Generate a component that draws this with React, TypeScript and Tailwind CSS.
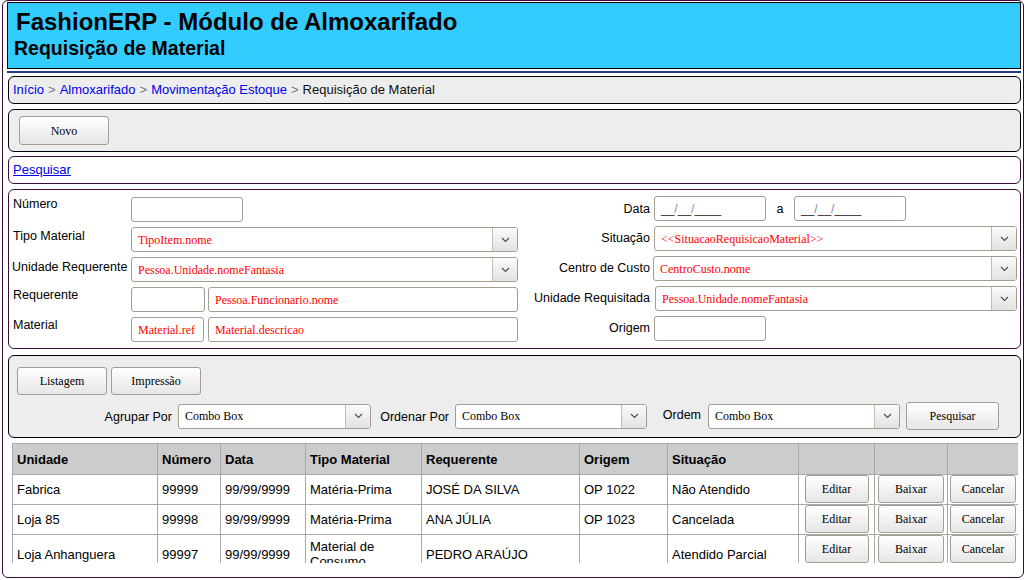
import React from "react";

const sans = "font-['Liberation_Sans',Arial,sans-serif]";
const serif = "font-['Liberation_Serif','Times_New_Roman',serif]";

function Chevron() {
  return (
    <svg width="9" height="6" viewBox="0 0 9 6">
      <path d="M1 1 L4.5 4.5 L8 1" stroke="#4a4a4a" strokeWidth="1.1" fill="none" />
    </svg>
  );
}

function Select({ className = "", text, red = false }: { className?: string; text: string; red?: boolean }) {
  return (
    <div className={`flex h-[25px] border border-[#a59d8f] rounded-[3px] bg-white overflow-hidden ${className}`}>
      <div className={`flex-1 flex items-center pl-[6px] text-[12px] whitespace-nowrap ${serif} ${red ? "text-[#ff0000]" : "text-black"}`}>
        {text}
      </div>
      <div className="w-[25px] border-l border-[#c4bdb1] bg-linear-to-b from-[#fbfbfb] to-[#e2e2e2] flex items-center justify-center">
        <Chevron />
      </div>
    </div>
  );
}

function Input({ className = "", text, children }: { className?: string; text?: string; children?: React.ReactNode }) {
  return (
    <div className={`flex items-center h-[25px] border border-[#a59d8f] rounded-[3px] bg-white pl-[6px] text-[12px] whitespace-nowrap text-[#ff0000] ${serif} ${className}`}>
      {text}
      {children}
    </div>
  );
}

function Btn({ className = "", children }: { className?: string; children: React.ReactNode }) {
  return (
    <div className={`flex items-center justify-center h-[28px] border border-[#a59d8f] rounded-[3px] bg-linear-to-b from-white to-[#e6e6e6] text-[12px] text-black ${serif} ${className}`}>
      {children}
    </div>
  );
}

function DateMask() {
  return (
    <span className={`text-[12px] text-[#333] ${sans}`}>
      __<span className="text-[#6f8fc8]">/</span>__<span className="text-[#6f8fc8]">/</span>____
    </span>
  );
}

function Label({ children, className = "" }: { children: React.ReactNode; className?: string }) {
  return <div className={`text-[12.5px] leading-[14px] text-black ${sans} ${className}`}>{children}</div>;
}

const rows = [
  { u: "Fabrica", n: "99999", d: "99/99/9999", t: "Matéria-Prima", r: "JOSÉ DA SILVA", o: "OP 1022", s: "Não Atendido" },
  { u: "Loja 85", n: "99998", d: "99/99/9999", t: "Matéria-Prima", r: "ANA JÚLIA", o: "OP 1023", s: "Cancelada" },
  { u: "Loja Anhanguera", n: "99997", d: "99/99/9999", t: "Material de Consumo", r: "PEDRO ARAÚJO", o: "", s: "Atendido Parcial" },
];

export default function App() {
  return (
    <div className="w-[1028px] h-[580px] bg-white overflow-hidden">
      <div className="ml-[2px] w-[1022px] h-[578px] border border-[#3a0c3a] rounded-[6px] pl-[4px] pr-[2px] pt-[1px] overflow-hidden">
        {/* Header */}
        <div className="h-[67px] border border-black bg-[#33ccff] pl-[8px] pt-[5px]">
          <div className={`text-[24px] font-bold leading-[28px] text-black ${sans}`}>FashionERP - Módulo de Almoxarifado</div>
          <div className={`text-[19.5px] font-bold leading-[24px] text-black -ml-[2px] ${sans}`}>Requisição de Material</div>
        </div>
        <div className="mt-[2px] h-[2px] bg-[#213d82]" />

        {/* Breadcrumb */}
        <div className={`mt-[3px] h-[28px] ml-[1px] border border-black rounded-[6px] bg-[#ededed] flex items-center pl-[4px] text-[13px] ${sans}`}>
          <span className="text-[#0000ee]">Início</span>
          <span className="text-[#777] mx-[4px]">&gt;</span>
          <span className="text-[#0000ee]">Almoxarifado</span>
          <span className="text-[#777] mx-[4px]">&gt;</span>
          <span className="text-[#0000ee]">Movimentação Estoque</span>
          <span className="text-[#777] mx-[4px]">&gt;</span>
          <span className="text-[#111]">Requisição de Material</span>
        </div>

        {/* Novo */}
        <div className="mt-[5px] h-[43px] ml-[1px] border border-black rounded-[6px] bg-[#ededed] pl-[10px] pt-[6px]">
          <Btn className="w-[90px] h-[29px]">Novo</Btn>
        </div>

        {/* Pesquisar link */}
        <div className={`mt-[4px] h-[28px] ml-[1px] border border-[#3a0c3a] rounded-[6px] bg-white flex items-center pl-[4px] text-[13px] ${sans}`}>
          <span className="text-[#0000ee] underline">Pesquisar</span>
        </div>

        {/* Filters */}
        <div className="mt-[5px] h-[160px] ml-[1px] border border-[#3a0c3a] rounded-[6px] bg-white pl-[4px] pt-[7px] flex flex-col gap-[5px]">
          {/* Row 1 */}
          <div className="flex h-[25px]">
            <Label className="w-[118px]">Número</Label>
            <Input className="w-[112px]" />
            <div className="w-[275px]" />
            <Label className="w-[132px] self-center text-right pb-[1px]">Data</Label>
            <Input className="ml-[4px] w-[112px] -mt-[1px]"><DateMask /></Input>
            <Label className="w-[28px] self-center text-center pb-[1px]">a</Label>
            <Input className="w-[112px] -mt-[1px]"><DateMask /></Input>
          </div>
          {/* Row 2 */}
          <div className="flex h-[25px]">
            <Label className="w-[118px] pt-[2px]">Tipo Material</Label>
            <Select className="w-[387px]" text="TipoItem.nome" red />
            <Label className="w-[132px] self-center text-right pb-[3px]">Situação</Label>
            <Select className="ml-[4px] w-[363px] -mt-[1px]" text="<<SituacaoRequisicaoMaterial>>" red />
          </div>
          {/* Row 3 */}
          <div className="flex h-[25px]">
            <Label className="w-[118px] pt-[3px] -ml-[1px] mr-[1px]">Unidade Requerente</Label>
            <Select className="w-[387px]" text="Pessoa.Unidade.nomeFantasia" red />
            <Label className="w-[132px] self-center text-right pb-[3px]">Centro de Custo</Label>
            <Select className="ml-[3px] w-[364px] -mt-[1px]" text="CentroCusto.nome" red />
          </div>
          {/* Row 4 */}
          <div className="flex h-[25px]">
            <Label className="w-[118px] pt-[1px]">Requerente</Label>
            <Input className="w-[74px]" />
            <Input className="ml-[3px] w-[310px]" text="Pessoa.Funcionario.nome" />
            <Label className="w-[132px] self-center text-right pb-[3px]">Unidade Requisitada</Label>
            <Select className="ml-[5px] w-[362px] -mt-[1px]" text="Pessoa.Unidade.nomeFantasia" red />
          </div>
          {/* Row 5 */}
          <div className="flex h-[25px]">
            <Label className="w-[118px] pt-[1px]">Material</Label>
            <Input className="w-[73px]" text="Material.ref" />
            <Input className="ml-[4px] w-[310px]" text="Material.descricao" />
            <Label className="w-[132px] self-center text-right pb-[4px]">Origem</Label>
            <Input className="ml-[4px] w-[112px] -mt-[1px]" />
          </div>
        </div>

        {/* Options */}
        <div className="mt-[6px] h-[83px] ml-[1px] border border-black rounded-[6px] bg-[#ededed] pl-[8px] pt-[11px]">
          <div className="flex gap-[4px]">
            <Btn className="w-[90px]">Listagem</Btn>
            <Btn className="w-[90px]">Impressão</Btn>
          </div>
          <div className="mt-[7px] flex items-center h-[28px]">
            <Label className="w-[155px] text-right pt-[2px]">Agrupar Por</Label>
            <Select className="ml-[6px] w-[193px]" text="Combo Box" />
            <Label className="w-[78px] text-right pt-[2px]">Ordenar Por</Label>
            <Select className="ml-[6px] w-[192px]" text="Combo Box" />
            <Label className="w-[54px] text-right -mt-[3px]">Ordem</Label>
            <Select className="ml-[7px] w-[192px]" text="Combo Box" />
            <Btn className="ml-[6px] w-[93px]">Pesquisar</Btn>
          </div>
        </div>

        {/* Table */}
        <div className="mt-[5px] ml-[5px] w-[1006px] h-[120px] overflow-hidden">
          <table className={`w-[1006px] table-fixed border-collapse text-[13px] text-black ${sans}`}>
            <colgroup>
              <col className="w-[145px]" />
              <col className="w-[63px]" />
              <col className="w-[85px]" />
              <col className="w-[116px]" />
              <col className="w-[158px]" />
              <col className="w-[88px]" />
              <col className="w-[131px]" />
              <col className="w-[76px]" />
              <col className="w-[73px]" />
              <col className="w-[71px]" />
            </colgroup>
            <thead>
              <tr className="h-[31px] bg-[#cccccc]">
                {["Unidade", "Número", "Data", "Tipo Material", "Requerente", "Origem", "Situação", "", "", ""].map((h, i) => (
                  <th key={i} className="border border-[#a8a8a8] text-left font-bold pl-[4px] pt-[2px] align-middle">
                    {h}
                  </th>
                ))}
              </tr>
            </thead>
            <tbody>
              {rows.map((r, i) => (
                <tr key={i} className="h-[30px]">
                  {[r.u, r.n, r.d, r.t, r.r, r.o, r.s].map((c, j) => (
                    <td key={j} className="border border-[#a8a8a8] pl-[4px] pr-[2px] pt-[4px] pb-[4px] align-middle leading-[15px] font-normal">
                      {c}
                    </td>
                  ))}
                  <td className="border border-[#a8a8a8] align-top">
                    <Btn className="mx-auto w-[64px]">Editar</Btn>
                  </td>
                  <td className="border border-[#a8a8a8] align-top">
                    <Btn className="mx-auto w-[66px]">Baixar</Btn>
                  </td>
                  <td className="border border-[#a8a8a8] align-top">
                    <Btn className="mx-auto w-[66px]">Cancelar</Btn>
                  </td>
                </tr>
              ))}
            </tbody>
          </table>
        </div>
      </div>
    </div>
  );
}
